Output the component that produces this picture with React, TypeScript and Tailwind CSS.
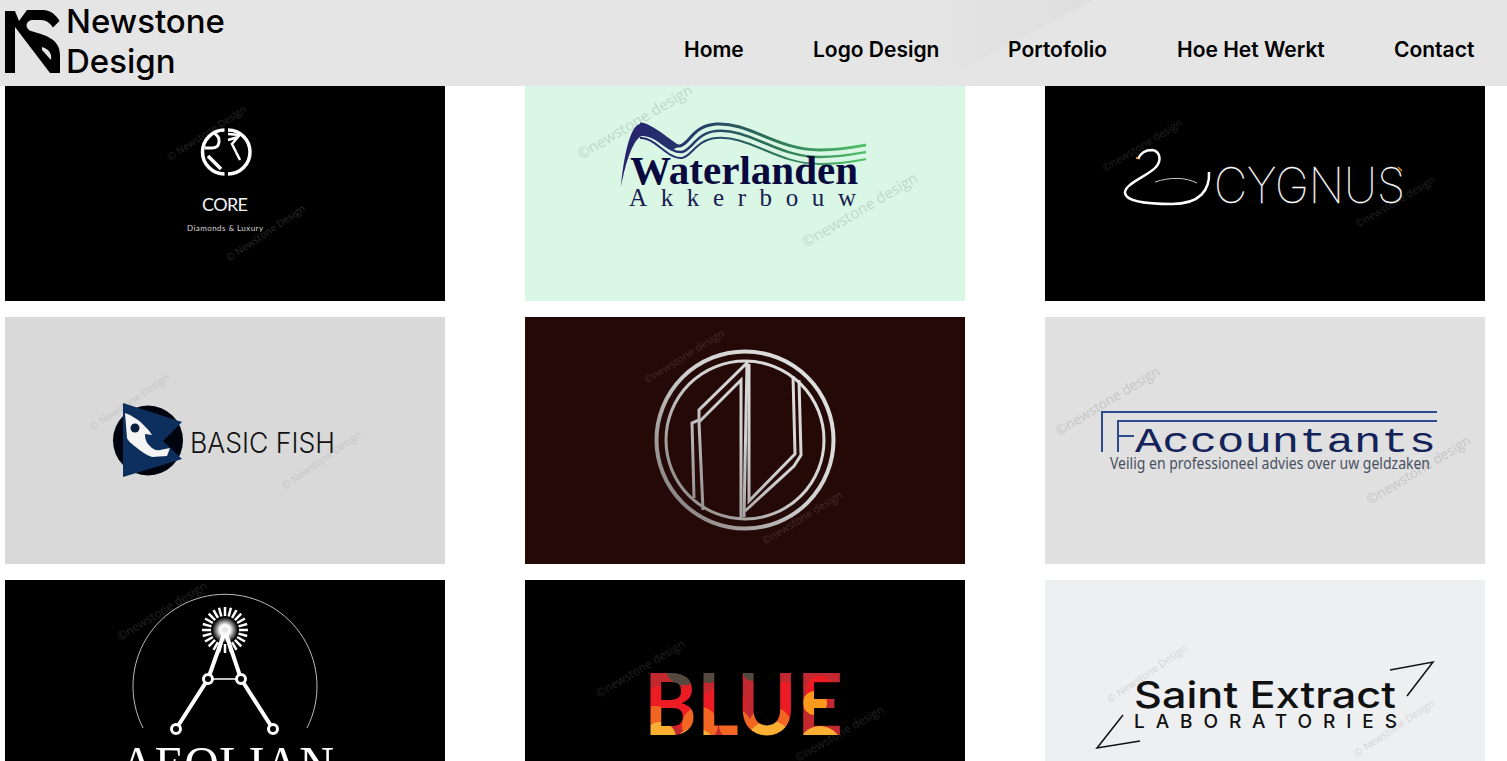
const navItems = [
  { label: "Home", width: "w-[59px]" },
  { label: "Logo Design", width: "w-[125px]" },
  { label: "Portofolio", width: "w-[99px]" },
  { label: "Hoe Het Werkt", width: "w-[147px]" },
  { label: "Contact", width: "w-[79px]" },
];

// watermark stamped diagonally over a logo, given by its start and end point
function Mark({ x1, y1, x2, y2, text, fill }: { x1: number; y1: number; x2: number; y2: number; text: string; fill: string }) {
  const length = Math.hypot(x2 - x1, y2 - y1);
  const angle = (Math.atan2(y2 - y1, x2 - x1) * 180) / Math.PI;
  return (
    <text
      x={x1}
      y={y1}
      transform={`rotate(${angle} ${x1} ${y1})`}
      fontFamily="'Open Sans', sans-serif"
      fontSize={length / (text.length * 0.54)}
      fill={fill}
      textLength={length}
      lengthAdjust="spacingAndGlyphs"
    >
      {text}
    </text>
  );
}

function Card({ box, bg, tall = true, children }: { box: string; bg: string; tall?: boolean; children: React.ReactNode }) {
  return (
    <div className={tall ? "h-[247px]" : "h-[215px]"} style={{ backgroundColor: bg }}>
      <svg viewBox={box} className="block w-full h-full">
        {children}
      </svg>
    </div>
  );
}

function BrandMark() {
  return (
    <svg viewBox="0 0 62 86" className="w-[62px] h-[86px] shrink-0">
      <path
        fillRule="evenodd"
        d="M5 11 L15 11 L19 21 L27 10 L43 10 C51 10 56 15 59.500 21 L53 27.500 C50 23 46 20 41 20 L33 20 C26 20 24 28 31 31 C44 35 60 38 60 55 L60 73 L50 73 L15 27 L15 73 L5 73 Z M42 50 L51 60 C52 55 50 49 42 47 Z"
        fill="#000"
      />
    </svg>
  );
}

function CoreLogo() {
  return (
    <Card box="5 86 440 215" bg="#000" tall={false}>
      <Mark x1={170} y1={161} x2={247} y2={111} text="© Newstone Design" fill="#262626" />
      <Mark x1={229} y1={262} x2={306} y2={210} text="© Newstone Design" fill="#2a2a2a" />
      <g fill="none" stroke="#fff" strokeWidth="3.500">
        <path d="M224.500 130 A22 22 0 0 0 224.500 174" />
        <path d="M228 130 A22 22 0 0 1 228 174" />
        <path d="M205 148 L212 148 C220 148 222 138 214 133" strokeWidth="3" />
        <path d="M208 156 L221 169" />
        <path d="M228 140 L238 137 L232 144 L240 160" strokeWidth="2.500" />
        <path d="M228 134 L240 135" strokeWidth="2.500" />
      </g>
      <text x="225" y="211" textAnchor="middle" fontFamily="Lato, sans-serif" fontSize="18" fill="#f4f4f4" textLength="46">CORE</text>
      <text x="225" y="231" textAnchor="middle" fontFamily="Lato, sans-serif" fontSize="8" fill="#d8d8d8" textLength="76">Diamonds &amp; Luxury</text>
    </Card>
  );
}

function WaterlandenLogo() {
  return (
    <Card box="525 86 440 215" bg="#d9f7e4" tall={false}>
      <defs>
        <linearGradient id="wave" x1="620" x2="868" y1="0" y2="0" gradientUnits="userSpaceOnUse">
          <stop offset="0" stopColor="#27206f" />
          <stop offset="0.3" stopColor="#243a6c" />
          <stop offset="0.6" stopColor="#2c7158" />
          <stop offset="1" stopColor="#4fc468" />
        </linearGradient>
      </defs>
      <Mark x1={581} y1={160} x2={694} y2={93} text="©newstone design" fill="#bfd8c8" />
      <Mark x1={806} y1={248} x2={919} y2={181} text="©newstone design" fill="#bfd8c8" />
      <path d="M621 187 C623 160 630 125 640 124 C650 122 665 136 680 146 L672 150 C660 142 650 136 642 136 C634 138 626 160 621 187 Z" fill="url(#wave)" />
      <g fill="none" stroke="url(#wave)">
        <path d="M640 124 C654 124 668 148 680 146 C690 144 692 126 716 124 C750 122 776 150 820 150 C840 150 855 147 866 145" strokeWidth="3" />
        <path d="M636 132 C654 130 668 154 682 152 C692 150 696 133 716 131 C750 128 776 157 820 157 C840 157 855 154 866 152" strokeWidth="2.500" />
        <path d="M640 138 C654 136 668 160 682 158 C692 156 696 140 716 138 C750 135 776 164 820 164 C840 164 855 161 866 159" strokeWidth="2" />
      </g>
      <text x="630" y="184" fontFamily="'Liberation Serif', serif" fontWeight="700" fontSize="39" fill="#07093f" textLength="228" lengthAdjust="spacingAndGlyphs">Waterlanden</text>
      <text x="629" y="206" fontFamily="'Liberation Serif', serif" fontSize="25" fill="#1a1c52" textLength="227">Akkerbouw</text>
    </Card>
  );
}

function CygnusLogo() {
  return (
    <Card box="1045 86 440 215" bg="#000" tall={false}>
      <Mark x1={1105} y1={172} x2={1183} y2={125} text="©newstone design" fill="#202020" />
      <Mark x1={1358} y1={228} x2={1436} y2={182} text="©newstone design" fill="#202020" />
      <path d="M1138 159 C1141 152 1147 150 1152 150 C1160 151 1162 160 1156 167 C1148 176 1124 184 1125 193 C1126 202 1150 204 1172 204 C1200 204 1210 190 1209 172" fill="none" stroke="#fff" strokeWidth="2.500" />
      <path d="M1155 182 C1170 177 1185 177 1197 183" fill="none" stroke="#ccc" strokeWidth="1" />
      <circle cx="1137" cy="158" r="1.200" fill="#e8801e" />
      <path d="M1398 167 L1402 171" stroke="#e8801e" strokeWidth="1.500" />
      <text x="1214" y="203" fontFamily="Inter, sans-serif" fontWeight="100" fontSize="49" fill="#fff" stroke="#fff" strokeWidth="0.300" textLength="191" lengthAdjust="spacingAndGlyphs">CYGNUS</text>
    </Card>
  );
}

function FishLogo() {
  return (
    <Card box="5 317 440 247" bg="#d9d9d9">
      <Mark x1={93} y1={431} x2={170} y2={379} text="© Newstone Design" fill="#c6c6c6" />
      <Mark x1={285} y1={490} x2={362} y2={436} text="© Newstone Design" fill="#c6c6c6" />
      <circle cx="148" cy="440.500" r="35" fill="#00040f" />
      <path d="M123 403 L182 422 L163 441 L182 459 L123 477 Z" fill="#0d2f5e" />
      <path d="M125 413 L130 415 L138 420 C143 424 149 430 152 435 L145 434 C145 440 147 443 149 445 C152 449 156 451 160 450 L170 448 L167 456 L152 457 C146 455 141 451 137 448 C132 444 128 441 127 438 Z" fill="#f4f4f4" />
      <circle cx="135" cy="428" r="4.500" fill="#0a1f3f" />
      <text x="190" y="453" fontFamily="Inter, sans-serif" fontWeight="300" fontSize="28" fill="#111" textLength="145" lengthAdjust="spacingAndGlyphs">BASIC FISH</text>
    </Card>
  );
}

function MonogramLogo() {
  return (
    <Card box="525 317 440 247" bg="#240907">
      <defs>
        <linearGradient id="chrome" x1="655" y1="520" x2="835" y2="360" gradientUnits="userSpaceOnUse">
          <stop offset="0" stopColor="#77716f" />
          <stop offset="0.5" stopColor="#cfcfcf" />
          <stop offset="1" stopColor="#e4e4e4" />
        </linearGradient>
      </defs>
      <Mark x1={647} y1={384} x2={725} y2={335} text="©newstone design" fill="#452c2a" />
      <Mark x1={765} y1={545} x2={843} y2={497} text="©newstone design" fill="#452c2a" />
      <g fill="none" stroke="url(#chrome)" strokeWidth="3">
        <circle cx="745" cy="440" r="88.500" strokeWidth="4" />
        <circle cx="745" cy="440" r="79" />
        <path d="M694 498 L692 423 L699 420 L699 410 L747 363 L744 517" />
        <path d="M703 510 L699 422 L741 380 L741 518" />
        <path d="M749 364 L749 501 L795 454 L793 376" />
        <path d="M745 511 L794 466 L801 455 L799 380" />
      </g>
    </Card>
  );
}

function AccountantsLogo() {
  return (
    <Card box="1045 317 440 247" bg="#e0e0e0">
      <Mark x1={1059} y1={436} x2={1161} y2={374} text="©newstone design" fill="#c6c6c6" />
      <Mark x1={1370} y1={505} x2={1472} y2={443} text="©newstone design" fill="#c6c6c6" />
      <g fill="none" stroke="#2e4a8f" strokeWidth="2">
        <path d="M1437 412 L1102 412 L1102 452" />
        <path d="M1437 421 L1118 421 L1118 452" />
        <path d="M1118 436 L1134 436" />
      </g>
      <text x="1135" y="452" fontFamily="'Liberation Mono', monospace" fontSize="35" fill="#14235a" textLength="301" lengthAdjust="spacingAndGlyphs">Accountants</text>
      <text x="1110" y="469" fontFamily="'Noto Sans', sans-serif" fontSize="16" fill="#4a5163" textLength="320" lengthAdjust="spacingAndGlyphs">Veilig en professioneel advies over uw geldzaken</text>
    </Card>
  );
}

function AeolianLogo() {
  const ticks = Array.from({ length: 24 }, (_, i) => (i * Math.PI) / 12);
  return (
    <Card box="5 580 440 247" bg="#000">
      <defs>
        <radialGradient id="glow">
          <stop offset="0" stopColor="#ddd" />
          <stop offset="0.4" stopColor="#fff" />
          <stop offset="1" stopColor="#fff" stopOpacity="0" />
        </radialGradient>
      </defs>
      <Mark x1={120} y1={641} x2={208} y2={588} text="©newstone design" fill="#232323" />
      <path d="M143 728 A92 92 0 1 1 307 728" fill="none" stroke="#bbb" strokeWidth="1" />
      {ticks.map((a, i) => (
        <line
          key={i}
          x1={225 + Math.cos(a) * 14}
          y1={630 + Math.sin(a) * 14}
          x2={225 + Math.cos(a) * 23}
          y2={630 + Math.sin(a) * 23}
          stroke="#fff"
          strokeWidth="2.500"
        />
      ))}
      <circle cx="225" cy="630" r="13" fill="url(#glow)" />
      <g fill="none" stroke="#fff">
        <path d="M224 634 L208 679 L176 729" strokeWidth="4" />
        <path d="M226 634 L241 679 L273 729" strokeWidth="4" />
        <path d="M208 679 L241 679" strokeWidth="1.500" />
      </g>
      {[[208, 679], [241, 679], [176, 729], [273, 729]].map(([cx, cy]) => (
        <circle key={cx} cx={cx} cy={cy} r="4.500" fill="#000" stroke="#fff" strokeWidth="3" />
      ))}
      <text x="120" y="781" fontFamily="'Liberation Serif', serif" fontSize="50" fill="#fff" textLength="214" lengthAdjust="spacingAndGlyphs">AEOLIAN</text>
    </Card>
  );
}

function BlueLogo() {
  return (
    <Card box="525 580 440 247" bg="#000">
      <defs>
        <clipPath id="blue-letters">
          <text x="644" y="735" fontFamily="Lato, sans-serif" fontWeight="700" fontSize="86" textLength="199" lengthAdjust="spacingAndGlyphs">BLUE</text>
        </clipPath>
      </defs>
      <Mark x1={599} y1={698} x2={686} y2={646} text="©newstone design" fill="#202020" />
      <Mark x1={798} y1={762} x2={885} y2={712} text="©newstone design" fill="#202020" />
      <g clipPath="url(#blue-letters)">
        <rect x="640" y="665" width="210" height="75" fill="#c4282f" />
        <circle cx="683" cy="668" r="17" fill="#54493f" />
        <circle cx="708" cy="672" r="11" fill="#54493f" />
        <circle cx="752" cy="672" r="9" fill="#54493f" />
        <circle cx="757" cy="668" r="9" fill="#54493f" />
        <circle cx="660" cy="700" r="14" fill="#ed1c24" />
        <circle cx="690" cy="708" r="22" fill="#ed1c24" />
        <circle cx="725" cy="705" r="20" fill="#ed1c24" />
        <circle cx="785" cy="700" r="18" fill="#ed1c24" />
        <circle cx="820" cy="690" r="14" fill="#ed1c24" />
        <circle cx="655" cy="722" r="16" fill="#f26522" />
        <circle cx="700" cy="725" r="18" fill="#f26522" />
        <circle cx="735" cy="725" r="16" fill="#f26522" />
        <circle cx="770" cy="728" r="22" fill="#f26522" />
        <circle cx="815" cy="703" r="12" fill="#fa9a1c" />
        <circle cx="660" cy="738" r="16" fill="#fbb034" />
        <circle cx="695" cy="750" r="22" fill="#fbb034" />
        <circle cx="770" cy="745" r="24" fill="#fbb034" />
        <circle cx="820" cy="748" r="22" fill="#fbb034" />
      </g>
    </Card>
  );
}

function SaintLogo() {
  return (
    <Card box="1045 580 440 247" bg="#eeeff1">
      <Mark x1={1110} y1={703} x2={1188} y2={650} text="© Newstone Design" fill="#d4d5d7" />
      <Mark x1={1357} y1={757} x2={1435} y2={705} text="© Newstone Design" fill="#d4d5d7" />
      <g fill="none" stroke="#111" strokeWidth="1.500">
        <path d="M1390 670 L1433 662 L1407 696" />
        <path d="M1123 715 L1097 748 L1140 741" />
      </g>
      <text x="1134" y="708" fontFamily="Inter, sans-serif" fontWeight="500" fontSize="37" fill="#111" textLength="262" lengthAdjust="spacingAndGlyphs">Saint Extract</text>
      <text x="1134" y="728" fontFamily="Inter, sans-serif" fontWeight="500" fontSize="19" fill="#111" textLength="263">LABORATORIES</text>
    </Card>
  );
}

export default function App() {
  return (
    <div className="h-screen overflow-hidden bg-white font-['Inter',sans-serif] text-black">
      <header className="relative flex h-[86px] items-start justify-between overflow-hidden bg-[#e5e5e5] pr-[34px]">
        <svg viewBox="0 0 1507 86" className="absolute inset-0 h-full w-full">
          <defs>
            <linearGradient id="sheen" x1="900" x2="1090" y1="0" y2="0" gradientUnits="userSpaceOnUse">
              <stop offset="0" stopColor="#e5e5e5" />
              <stop offset="1" stopColor="#dfdfdf" />
            </linearGradient>
          </defs>
          <path d="M900 0 L1094 0 L930 86 L880 86 Z" fill="url(#sheen)" />
        </svg>
        <div className="relative flex items-start">
          <BrandMark />
          <div className="ml-[4px] mt-[1px] text-[33px] font-medium leading-[40px]">
            <div>Newstone</div>
            <div>Design</div>
          </div>
        </div>
        <nav className="relative mt-[37px] flex gap-[70px]">
          {navItems.map((item) => (
            <a key={item.label} className={`${item.width} whitespace-nowrap text-[21px] font-semibold leading-[26px]`}>
              {item.label}
            </a>
          ))}
        </nav>
      </header>
      <main className="grid w-[1485px] grid-cols-3 gap-x-[80px] gap-y-[16px] pl-[5px]">
        <CoreLogo />
        <WaterlandenLogo />
        <CygnusLogo />
        <FishLogo />
        <MonogramLogo />
        <AccountantsLogo />
        <AeolianLogo />
        <BlueLogo />
        <SaintLogo />
      </main>
    </div>
  );
}
